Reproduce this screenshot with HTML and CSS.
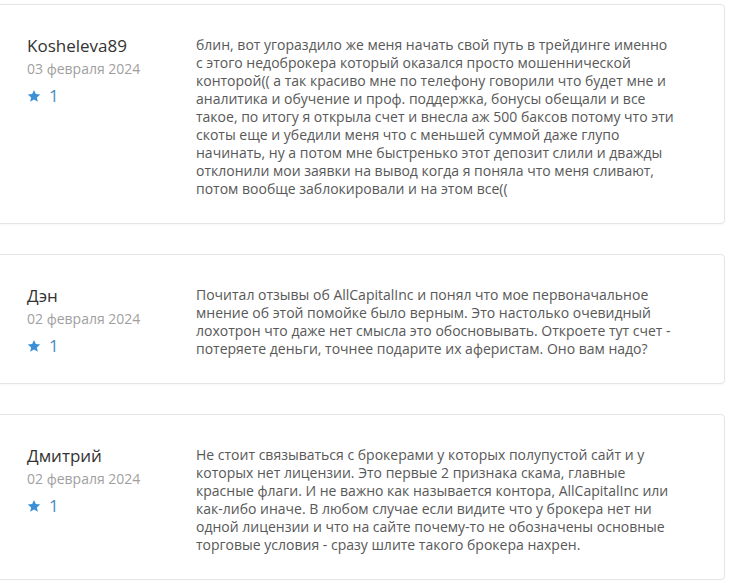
FILE: index.html
```html
<!DOCTYPE html>
<html lang="ru">
<head>
<meta charset="utf-8">
<title>Отзывы</title>
<link rel="stylesheet" href="styles.css">
</head>
<body>
<div class="reviews">
  <div class="card">
    <div class="meta">
      <div class="name">Kosheleva89</div>
      <div class="date">03 февраля 2024</div>
      <div class="rating"><svg class="star" viewBox="0 0 24 24"><path d="M12 1.5l3.1 7.1 7.6.7-5.8 5.1 1.7 7.6L12 18l-6.6 4 1.7-7.6-5.8-5.1 7.6-.7z"/></svg><span>1</span></div>
    </div>
    <div class="text">блин, вот угораздило же меня начать свой путь в трейдинге именно с этого недоброкера который оказался просто мошеннической конторой(( а так красиво мне по телефону говорили что будет мне и аналитика и обучение и проф. поддержка, бонусы обещали и все такое, по итогу я открыла счет и внесла аж 500 баксов потому что эти скоты еще и убедили меня что с меньшей суммой даже глупо начинать, ну а потом мне быстренько этот депозит слили и дважды отклонили мои заявки на вывод когда я поняла что меня сливают, потом вообще заблокировали и на этом все((</div>
  </div>
  <div class="card">
    <div class="meta">
      <div class="name">Дэн</div>
      <div class="date">02 февраля 2024</div>
      <div class="rating"><svg class="star" viewBox="0 0 24 24"><path d="M12 1.5l3.1 7.1 7.6.7-5.8 5.1 1.7 7.6L12 18l-6.6 4 1.7-7.6-5.8-5.1 7.6-.7z"/></svg><span>1</span></div>
    </div>
    <div class="text">Почитал отзывы об AllCapitalInc и понял что мое первоначальное мнение об этой помойке было верным. Это настолько очевидный лохотрон что даже нет смысла это обосновывать. Откроете тут счет - потеряете деньги, точнее подарите их аферистам. Оно вам надо?</div>
  </div>
  <div class="card">
    <div class="meta">
      <div class="name">Дмитрий</div>
      <div class="date">02 февраля 2024</div>
      <div class="rating"><svg class="star" viewBox="0 0 24 24"><path d="M12 1.5l3.1 7.1 7.6.7-5.8 5.1 1.7 7.6L12 18l-6.6 4 1.7-7.6-5.8-5.1 7.6-.7z"/></svg><span>1</span></div>
    </div>
    <div class="text">Не стоит связываться с брокерами у которых полупустой сайт и у которых нет лицензии. Это первые 2 признака скама, главные красные флаги. И не важно как называется контора, AllCapitalInc или как-либо иначе. В любом случае если видите что у брокера нет ни одной лицензии и что на сайте почему-то не обозначены основные торговые условия - сразу шлите такого брокера нахрен.</div>
  </div>
</div>
</body>
</html>
```

FILE: styles.css
```css
html, body {
  margin: 0;
  padding: 0;
  background: #fff;
}
body {
  font-family: "Open Sans", "Liberation Sans", sans-serif;
  overflow: hidden;
}
.reviews {
  display: flex;
  flex-direction: column;
  gap: 30px;
  padding-top: 4px;
  margin-left: -10px;
  width: 735px;
}
.card {
  display: flex;
  border: 1px solid #e6e6e6;
  border-radius: 4px;
  background: #fff;
  padding: 31px 20px 25px 36px;
  box-shadow: 0 1px 2px rgba(0, 0, 0, 0.03);
}
.meta {
  flex: 0 0 169px;
}
.name {
  font-size: 17px;
  line-height: 22px;
  color: #333;
  margin-top: -1px;
}
.date {
  font-size: 14px;
  line-height: 18px;
  color: #a0a0a0;
  margin-top: 3px;
}
.rating {
  display: flex;
  align-items: center;
  gap: 8px;
  margin-top: 7px;
  font-size: 17px;
  line-height: 22px;
  color: #4a8cc2;
}
.star {
  width: 14px;
  height: 14px;
  fill: #3a8fd6;
}
.text {
  width: 478px;
  font-size: 14px;
  line-height: 18px;
  color: #585858;
}
```
